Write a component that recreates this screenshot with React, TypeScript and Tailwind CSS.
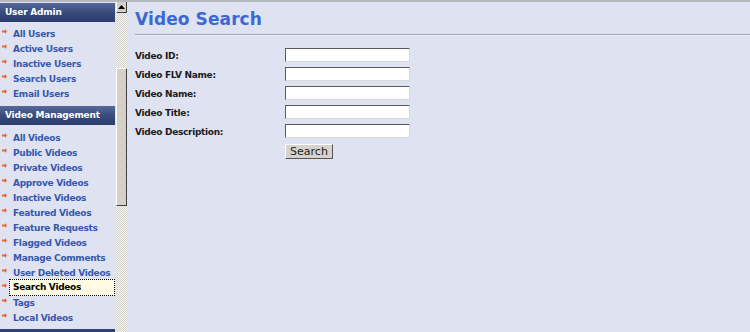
import React from "react";

const userItems = ["All Users", "Active Users", "Inactive Users", "Search Users", "Email Users"];
const videoItems = [
  "All Videos",
  "Public Videos",
  "Private Videos",
  "Approve Videos",
  "Inactive Videos",
  "Featured Videos",
  "Feature Requests",
  "Flagged Videos",
  "Manage Comments",
  "User Deleted Videos",
  "Search Videos",
  "Tags",
  "Local Videos",
];
const fields = ["Video ID:", "Video FLV Name:", "Video Name:", "Video Title:", "Video Description:"];

const font = { fontFamily: '"DejaVu Sans", Verdana, sans-serif' };

function Bullet() {
  return (
    <svg width="5" height="5" viewBox="0 0 5 5" className="absolute left-[2px] top-[2px]">
      <path d="M0 1.5 L3 1.5 L3 0 L5 2.5 L3 5 L3 3.5 L0 3.5 Z" fill="#f0642a" />
    </svg>
  );
}

function SectionHeader({ title }: { title: string }) {
  return (
    <div className="h-[19px] flex items-center pl-[5px] bg-gradient-to-b from-[#56699a] via-[#374b7c] to-[#2b3e6d] text-white font-bold text-[9px] tracking-[-0.2px] whitespace-nowrap">
      {title}
    </div>
  );
}

function NavItem({ label, active }: { label: string; active?: boolean }) {
  return (
    <div className="relative h-[15px] whitespace-nowrap text-[9px] font-bold tracking-[-0.3px]">
      <Bullet />
      {active ? (
        <div className="absolute left-[9px] right-0 top-[-2px] h-[17px] pl-[3px] pt-[1px] flex items-center bg-[#fffbe2] border border-dotted border-black text-black">
          {label}
        </div>
      ) : (
        <div className="pl-[13px] h-[15px] flex items-center text-[#3558ad]">{label}</div>
      )}
    </div>
  );
}

export default function App() {
  return (
    <div className="w-[750px] h-[332px] overflow-hidden flex bg-[#dfe2f1] border-t-2 border-[#b7b8bd]" style={font}>
      <div className="w-[115px] shrink-0 pt-[1px]">
        <SectionHeader title="User Admin" />
        <div className="pt-[5px] pb-[4px]">
          {userItems.map((u) => (
            <NavItem key={u} label={u} />
          ))}
        </div>
        <SectionHeader title="Video Management" />
        <div className="pt-[6px] pb-[3px]">
          {videoItems.map((v) => (
            <NavItem key={v} label={v} active={v === "Search Videos"} />
          ))}
        </div>
        <div className="h-[19px] bg-[#2f4372]" />
      </div>

      <div className="w-[13px] shrink-0 flex flex-col bg-[repeating-conic-gradient(#d4d1cb_0_25%,#f6f6f4_0_50%)] bg-[length:2px_2px]">
        <div className="mt-[-1px] mx-[1px] h-[12px] bg-[#d4d0c8] border border-t-white border-l-white border-r-[#404040] border-b-[#404040] flex items-center justify-center">
          <svg width="7" height="4" viewBox="0 0 7 4">
            <path d="M3.5 0 L7 4 L0 4 Z" fill="#000" />
          </svg>
        </div>
        <div className="mt-[55px] mx-[1px] h-[138px] bg-[#d4d0c8] border border-t-white border-l-white border-r-[#404040] border-b-[#404040]" />
      </div>

      <div className="flex-1 pl-[7px]">
        <div className="h-[32px] pt-[3px] flex items-center text-[#3b69d3] font-bold text-[17px] tracking-[0.1px]">
          Video Search
        </div>
        <div className="h-[2px] bg-[#a3a6b3] border-b border-[#eef0f8]" />
        <div className="pt-[12px]">
          {fields.map((f) => (
            <div key={f} className="h-[19px] flex items-start">
              <div className="w-[150px] pt-[2px] text-[9px] font-bold tracking-[-0.3px] text-[#1b1b1b] whitespace-nowrap">
                {f}
              </div>
              <input
                type="text"
                className="w-[125px] h-[14px] bg-white border border-t-[#5a5a5a] border-l-[#5a5a5a] border-r-[#d8d8d8] border-b-[#d8d8d8] outline-none"
              />
            </div>
          ))}
          <div className="flex pl-[150px] pt-[1px]">
            <button className="w-[48px] h-[15px] bg-[#d6d3cc] border border-t-white border-l-white border-r-[#555] border-b-[#555] text-[11px] leading-none text-[#222]">
              Search
            </button>
          </div>
        </div>
      </div>
    </div>
  );
}
